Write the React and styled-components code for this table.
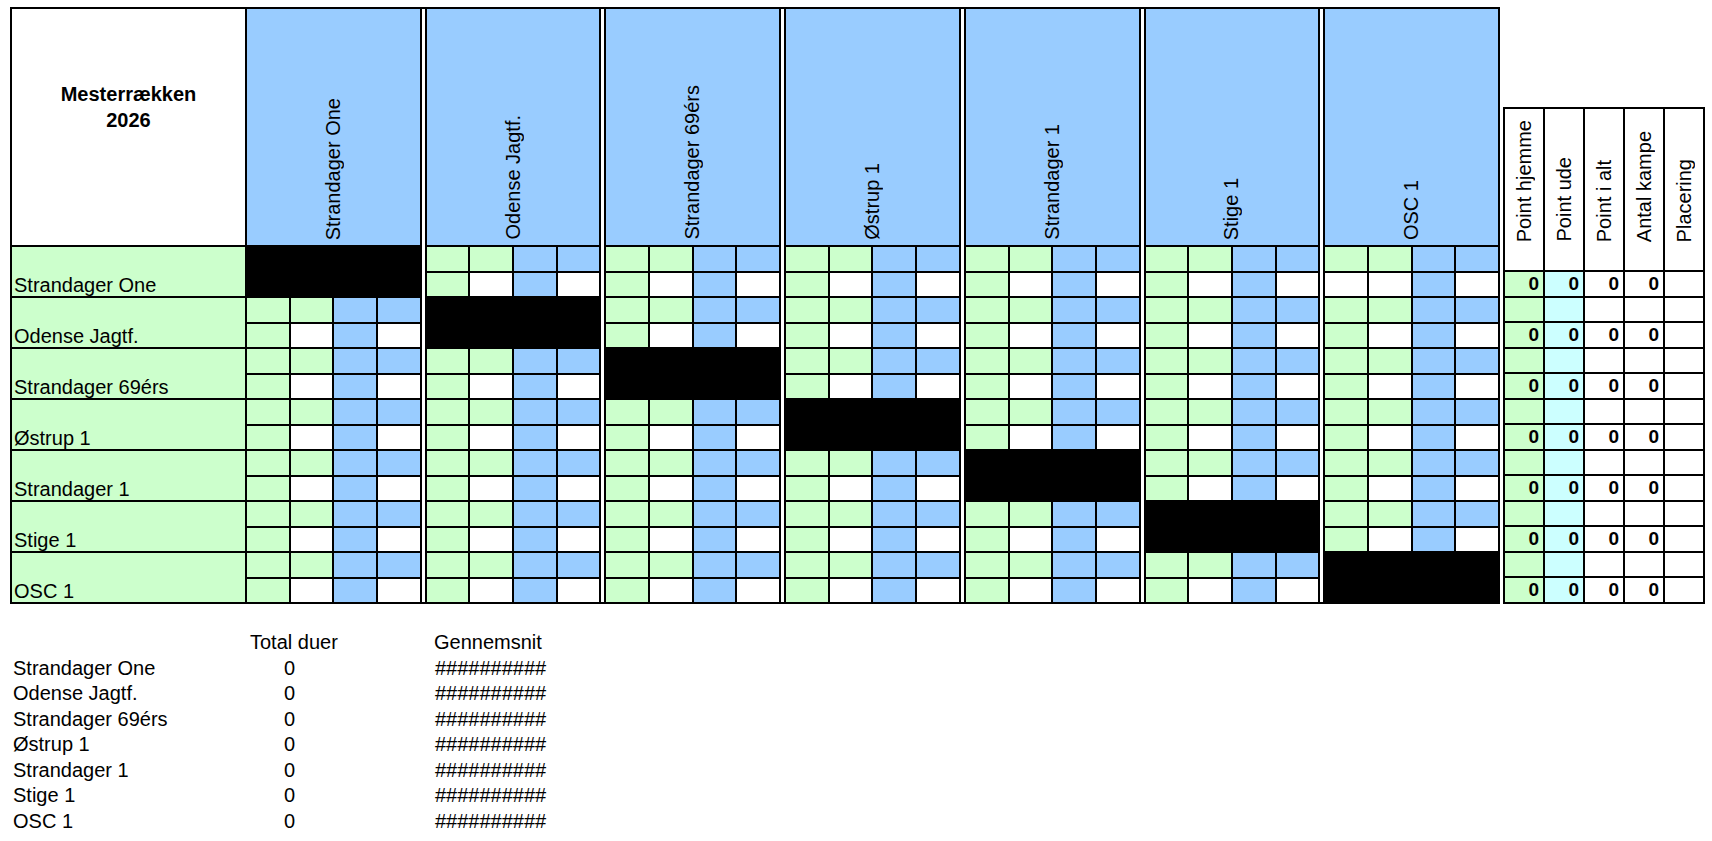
import styled, { createGlobalStyle } from "styled-components";

const teams = [
  "Strandager One",
  "Odense Jagtf.",
  "Strandager 69érs",
  "Østrup 1",
  "Strandager 1",
  "Stige 1",
  "OSC 1",
];

const statLabels = ["Point hjemme", "Point ude", "Point i alt", "Antal kampe", "Placering"];

const colors = {
  green: "#ccffcc",
  blue: "#99ccff",
  white: "#ffffff",
  cyan: "#ccffff",
};

const topTones = ["green", "green", "blue", "blue"];
const bottomTones = ["green", "white", "blue", "white"];

const matrixColumns = `233px ${Array(7).fill("repeat(4, 1fr)").join(" 3px ")}`;

const GlobalStyle = createGlobalStyle`
  body {
    margin: 0;
    background: #fff;
    color: #000;
    font-family: "Liberation Sans", Arial, sans-serif;
  }
`;

const Page = styled.div`
  padding: 7px 0 0 10px;
`;

const Board = styled.div`
  display: flex;
  align-items: flex-end;
  gap: 3px;
`;

const Matrix = styled.div`
  display: grid;
  box-sizing: border-box;
  width: 1490px;
  height: 597px;
  padding: 2px;
  gap: 2px;
  background: #000;
  grid-template-columns: ${matrixColumns};
  grid-template-rows: 236px repeat(14, 1fr);
`;

const Spacer = styled.div`
  grid-row: 1 / -1;
  grid-column: ${(p) => p.$col};
  background: #fff;
`;

const TitleCell = styled.div`
  background: #fff;
  padding-top: 72px;
  text-align: center;
  font-size: 20px;
  font-weight: 700;
  line-height: 26px;
`;

const TeamHeader = styled.div`
  grid-column: span 4;
  background: ${colors.blue};
  display: flex;
  justify-content: center;
  align-items: flex-end;
  padding-bottom: 5px;
`;

const VerticalLabel = styled.span`
  writing-mode: vertical-rl;
  transform: rotate(180deg);
  font-size: 20px;
  line-height: 23px;
  white-space: nowrap;
`;

const NameCell = styled.div`
  grid-row: span 2;
  background: ${colors.green};
  display: flex;
  align-items: flex-end;
  padding-left: 2px;
  font-size: 20px;
  line-height: 21px;
  white-space: nowrap;
`;

const Cell = styled.div`
  background: ${(p) => colors[p.$tone]};
`;

const Block = styled.div`
  grid-column: span 4;
  grid-row: span 2;
  background: #000;
`;

const Stats = styled.div`
  display: grid;
  box-sizing: border-box;
  width: 202px;
  height: 497px;
  padding: 2px;
  gap: 2px;
  background: #000;
  grid-template-columns: repeat(5, 1fr);
  grid-template-rows: 161px repeat(13, 1fr);
`;

const StatHead = styled.div`
  background: #fff;
  display: flex;
  justify-content: center;
  align-items: flex-end;
  padding-bottom: 28px;
`;

const StatCell = styled.div`
  background: ${(p) => colors[p.$tone]};
  display: flex;
  align-items: center;
  justify-content: flex-end;
  padding-right: 4px;
  font-size: 19px;
  font-weight: 700;
`;

const Summary = styled.div`
  display: grid;
  grid-template-columns: 237px 85px 99px auto;
  grid-auto-rows: 25.5px;
  margin-top: 26px;
  font-size: 20px;
  line-height: 25.5px;
  white-space: nowrap;
`;

const SummaryName = styled.div`
  grid-column: 1;
  padding-left: 3px;
`;

const SummaryHead = styled.div`
  grid-column: ${(p) => p.$col};
  padding-left: 3px;
`;

const SummaryCount = styled.div`
  grid-column: 2;
  text-align: center;
`;

const SummaryAverage = styled.div`
  grid-column: 4;
  padding-left: 4px;
`;

function MatrixTable() {
  const cells = [];

  teams.forEach((team, r) => {
    cells.push(<NameCell key={`n${r}`}>{team}</NameCell>);
    teams.forEach((_, g) => {
      if (g === r) {
        cells.push(<Block key={`b${r}`} />);
      } else {
        topTones.forEach((tone, k) =>
          cells.push(<Cell key={`t${r}-${g}-${k}`} $tone={tone} />)
        );
      }
    });
    teams.forEach((_, g) => {
      if (g === r) return;
      bottomTones.forEach((tone, k) => {
        const t = r === 0 && g === 6 && k === 0 ? "white" : tone;
        cells.push(<Cell key={`u${r}-${g}-${k}`} $tone={t} />);
      });
    });
  });

  return (
    <Matrix>
      {[0, 1, 2, 3, 4, 5].map((g) => (
        <Spacer key={`s${g}`} $col={6 + g * 5} />
      ))}
      <TitleCell>
        Mesterrækken
        <br />
        2026
      </TitleCell>
      {teams.map((team) => (
        <TeamHeader key={team}>
          <VerticalLabel>{team}</VerticalLabel>
        </TeamHeader>
      ))}
      {cells}
    </Matrix>
  );
}

function StatsTable() {
  const tones = ["green", "cyan", "white", "white", "white"];

  return (
    <Stats>
      {statLabels.map((label) => (
        <StatHead key={label}>
          <VerticalLabel>{label}</VerticalLabel>
        </StatHead>
      ))}
      {Array.from({ length: 13 }).map((_, row) =>
        tones.map((tone, c) => (
          <StatCell key={`${row}-${c}`} $tone={tone}>
            {row % 2 === 0 && c < 4 ? "0" : ""}
          </StatCell>
        ))
      )}
    </Stats>
  );
}

function SummaryRow({ team }) {
  return (
    <>
      <SummaryName>{team}</SummaryName>
      <SummaryCount>0</SummaryCount>
      <SummaryAverage>##########</SummaryAverage>
    </>
  );
}

function SummaryTable() {
  return (
    <Summary>
      <SummaryHead $col={2}>Total duer</SummaryHead>
      <SummaryHead $col={4}>Gennemsnit</SummaryHead>
      {teams.map((team) => (
        <SummaryRow key={team} team={team} />
      ))}
    </Summary>
  );
}

export default function App() {
  return (
    <Page>
      <GlobalStyle />
      <Board>
        <MatrixTable />
        <StatsTable />
      </Board>
      <SummaryTable />
    </Page>
  );
}
